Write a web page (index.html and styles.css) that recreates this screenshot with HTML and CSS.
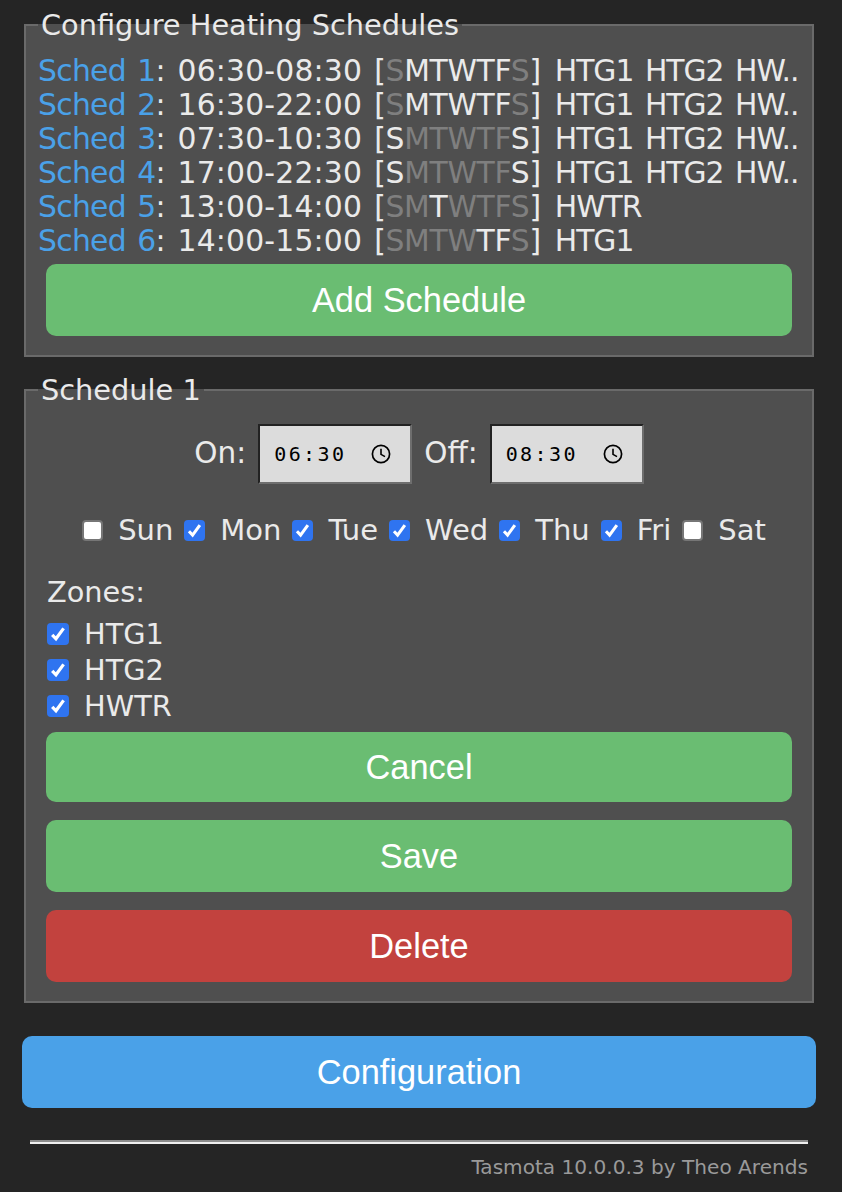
FILE: index.html
```html
<!DOCTYPE html>
<html lang="en">
<head>
  <meta charset="UTF-8" />
  <meta name="viewport" content="width=device-width, initial-scale=1.0" />
  <title>Tasmota</title>
  <link rel="stylesheet" href="styles.css">
</head>
<body>
  <div class="page">
    <fieldset class="panel">
      <legend>Configure Heating Schedules</legend>
      <div class="sched-list">
        <div class="sched"><a class="sched-link">Sched 1</a>: <span class="sched-time">06:30-08:30</span> <span class="sched-days">[<span class="off">S</span>MTWTF<span class="off">S</span>]</span> <span class="sched-zones">HTG1 HTG2 HW..</span></div>
        <div class="sched"><a class="sched-link">Sched 2</a>: <span class="sched-time">16:30-22:00</span> <span class="sched-days">[<span class="off">S</span>MTWTF<span class="off">S</span>]</span> <span class="sched-zones">HTG1 HTG2 HW..</span></div>
        <div class="sched"><a class="sched-link">Sched 3</a>: <span class="sched-time">07:30-10:30</span> <span class="sched-days">[S<span class="off">MTWTF</span>S]</span> <span class="sched-zones">HTG1 HTG2 HW..</span></div>
        <div class="sched"><a class="sched-link">Sched 4</a>: <span class="sched-time">17:00-22:30</span> <span class="sched-days">[S<span class="off">MTWTF</span>S]</span> <span class="sched-zones">HTG1 HTG2 HW..</span></div>
        <div class="sched"><a class="sched-link">Sched 5</a>: <span class="sched-time">13:00-14:00</span> <span class="sched-days">[<span class="off">SM</span>T<span class="off">WTFS</span>]</span> <span class="sched-zones">HWTR</span></div>
        <div class="sched"><a class="sched-link">Sched 6</a>: <span class="sched-time">14:00-15:00</span> <span class="sched-days">[<span class="off">SMTW</span>TF<span class="off">S</span>]</span> <span class="sched-zones">HTG1</span></div>
      </div>
      <button class="btn btn-add">Add Schedule</button>
    </fieldset>

    <fieldset class="panel panel-edit">
      <legend>Schedule 1</legend>
      <div class="times">
        <span class="time-label">On:</span>
        <div class="time-input">
          <span class="time-value">06:30</span>
          <svg class="clock" width="20" height="20" viewBox="0 0 20 20"><circle cx="10" cy="10" r="8.6" fill="none" stroke="#000" stroke-width="1.7"/><path d="M10 4.8V10.4L14 12.6" fill="none" stroke="#000" stroke-width="1.6"/></svg>
        </div>
        <span class="time-label">Off:</span>
        <div class="time-input">
          <span class="time-value">08:30</span>
          <svg class="clock" width="20" height="20" viewBox="0 0 20 20"><circle cx="10" cy="10" r="8.6" fill="none" stroke="#000" stroke-width="1.7"/><path d="M10 4.8V10.4L14 12.6" fill="none" stroke="#000" stroke-width="1.6"/></svg>
        </div>
      </div>
      <div class="days">
        <label class="day"><input type="checkbox">Sun</label>
        <label class="day"><input type="checkbox" checked>Mon</label>
        <label class="day"><input type="checkbox" checked>Tue</label>
        <label class="day"><input type="checkbox" checked>Wed</label>
        <label class="day"><input type="checkbox" checked>Thu</label>
        <label class="day"><input type="checkbox" checked>Fri</label>
        <label class="day"><input type="checkbox">Sat</label>
      </div>
      <div class="zones">
        <div class="zones-title">Zones:</div>
        <label class="zone"><input type="checkbox" checked>HTG1</label>
        <label class="zone"><input type="checkbox" checked>HTG2</label>
        <label class="zone"><input type="checkbox" checked>HWTR</label>
      </div>
      <button class="btn btn-cancel">Cancel</button>
      <button class="btn btn-save">Save</button>
      <button class="btn btn-delete">Delete</button>
    </fieldset>

    <button class="btn btn-config">Configuration</button>
    <div class="rule"></div>
    <div class="footer">Tasmota 10.0.0.3 by Theo Arends</div>
  </div>
</body>
</html>
```

FILE: styles.css
```css
body {
  margin: 0;
  background: #252525;
  color: #eaeaea;
  font-family: "DejaVu Sans", sans-serif;
  font-size: 29.8px;
  overflow: hidden;
}
.page {
  width: 794px;
  margin-left: 22px;
  padding-top: 9px;
}
.panel {
  margin: 0 2px 17px;
  padding: 0 12px 19px;
  border: 2px solid #6a6a6a;
  background: #4f4f4f;
}
.panel legend {
  padding: 0 3px;
  font-size: 28.8px;
  line-height: 32px;
}
.sched-list {
  margin-top: 13px;
}
.sched {
  height: 34px;
  line-height: 34px;
  white-space: nowrap;
  word-spacing: 2.5px;
}
.sched-link {
  color: #4aa1e8;
  letter-spacing: -0.7px;
}
.sched-time {
  letter-spacing: 0.2px;
}
.sched-days {
  letter-spacing: -0.3px;
}
.sched-zones {
  margin-left: 2px;
  letter-spacing: -1px;
  word-spacing: 3px;
}
.off {
  color: #7f7f7f;
}
.btn {
  display: block;
  width: 746px;
  height: 72px;
  margin: 0 8px;
  padding: 0;
  border: 0;
  border-radius: 10px;
  background: #6abd72;
  color: #fff;
  font-family: "Liberation Sans", Arial, sans-serif;
  font-size: 34.4px;
  line-height: 72px;
}
.btn-add {
  margin-top: 6px;
}
.btn-cancel {
  height: 70px;
  margin-top: 8px;
  line-height: 70px;
}
.btn-save {
  margin-top: 18px;
}
.btn-delete {
  margin-top: 18px;
  background: #c2423e;
}
.btn-config {
  width: 794px;
  margin: 33px 0 0;
  background: #4aa1e8;
}
.times {
  display: flex;
  justify-content: center;
  align-items: center;
  gap: 12px;
  margin-top: 18px;
}
.time-label {
  font-size: 29.5px;
  margin-top: -2px;
}
.time-input {
  display: flex;
  align-items: center;
  justify-content: space-between;
  box-sizing: border-box;
  width: 154px;
  height: 60px;
  padding: 0 19px 0 14px;
  background: #dcdcdc;
  border: 2px solid;
  border-color: #222 #6e6e6e #6e6e6e #222;
  color: #000;
}
.time-value {
  font-family: "DejaVu Sans Mono", monospace;
  font-size: 20px;
  letter-spacing: 2.4px;
}
.days {
  display: flex;
  justify-content: center;
  margin-top: 29px;
  padding-left: 10px;
}
.day {
  display: flex;
  align-items: center;
  margin-right: 11px;
  line-height: 34px;
  font-size: 29px;
}
.day:last-child {
  margin-right: 0;
}
input[type=checkbox] {
  appearance: none;
  box-sizing: border-box;
  flex: none;
  width: 22px;
  height: 22px;
  margin: 0 15px 0 0;
  border: 2px solid #767676;
  border-radius: 4px;
  background: #fff;
}
input[type=checkbox]:checked {
  border: 0;
  background: #2f74f0 url("data:image/svg+xml,%3Csvg xmlns='http://www.w3.org/2000/svg' viewBox='0 0 22 22'%3E%3Cpath d='M5.2 11.8L9 15.8L16.6 5.4' fill='none' stroke='%23fff' stroke-width='3.2'/%3E%3C/svg%3E") center / 100% 100% no-repeat;
}
.day input[type=checkbox] {
  width: 21px;
  height: 21px;
}
.zones {
  margin: 28px 0 0 9px;
}
.zones-title {
  height: 41px;
  line-height: 34px;
  font-size: 28.8px;
}
.zone {
  display: flex;
  align-items: center;
  height: 36px;
  font-size: 28.8px;
}
.rule {
  height: 4px;
  margin: 32px 8px 0;
  background: linear-gradient(#8c8c8c 40%, #eee 40%);
}
.footer {
  margin: 11px 8px 0;
  text-align: right;
  color: #9a9a9a;
  font-size: 20.1px;
}
```
